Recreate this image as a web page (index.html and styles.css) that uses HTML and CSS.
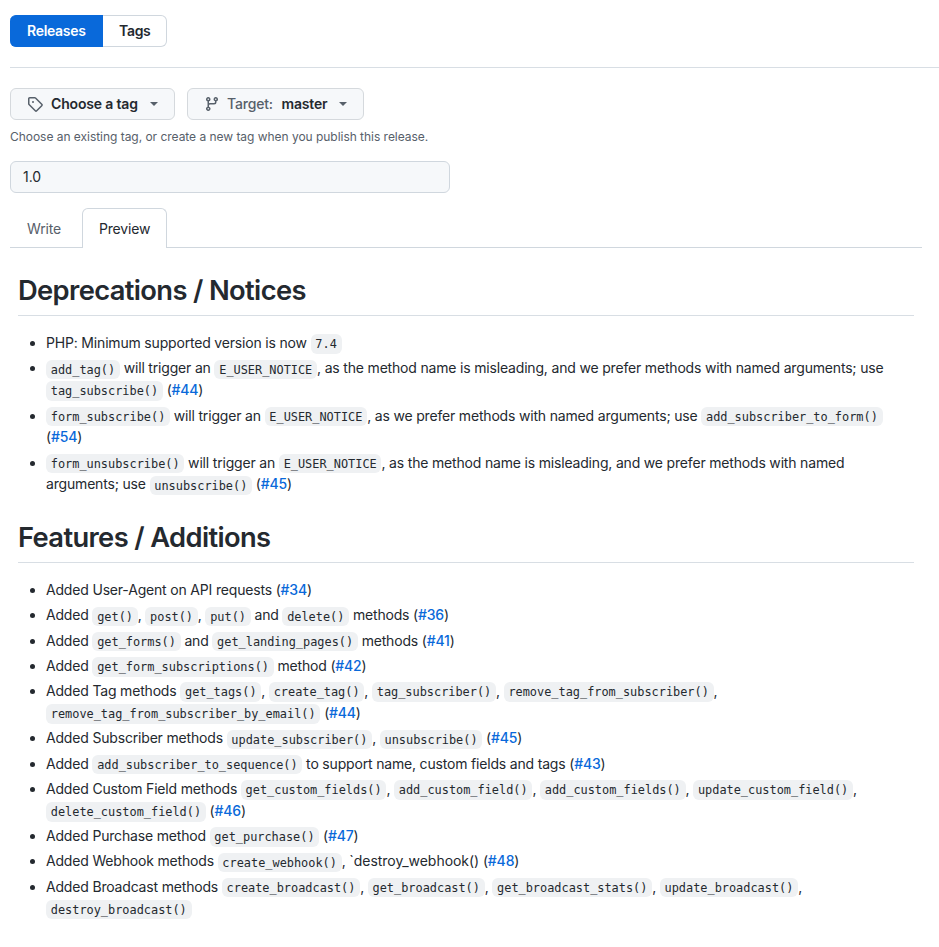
FILE: index.html
```html
<!DOCTYPE html>
<html lang="en">
<head>
<meta charset="utf-8">
<title>New release</title>
<link rel="stylesheet" href="styles.css">
</head>
<body>
<nav class="subnav">
  <a class="subnav-item selected">Releases</a><a class="subnav-item">Tags</a>
</nav>
<main class="form">
  <div class="pickers">
    <button class="btn tag-btn">
      <svg class="icon" viewBox="0 0 16 16" width="16" height="16"><path d="M1 7.775V2.75C1 1.784 1.784 1 2.75 1h5.025c.464 0 .91.184 1.238.513l6.25 6.25a1.75 1.75 0 0 1 0 2.474l-5.026 5.026a1.75 1.75 0 0 1-2.474 0l-6.25-6.25A1.752 1.752 0 0 1 1 7.775Zm1.5 0c0 .066.026.13.073.177l6.25 6.25a.25.25 0 0 0 .354 0l5.025-5.025a.25.25 0 0 0 0-.354l-6.25-6.25a.25.25 0 0 0-.177-.073H2.75a.25.25 0 0 0-.25.25ZM6 5a1 1 0 1 1 0 2 1 1 0 0 1 0-2Z"/></svg>
      <span class="label">Choose a tag</span><span class="caret"></span>
    </button>
    <button class="btn target-btn">
      <svg class="icon" viewBox="0 0 16 16" width="16" height="16"><path d="M9.5 3.25a2.25 2.25 0 1 1 3 2.122V6A2.5 2.5 0 0 1 10 8.5H6a1 1 0 0 0-1 1v1.128a2.251 2.251 0 1 1-1.5 0V5.372a2.25 2.25 0 1 1 1.5 0v1.836A2.493 2.493 0 0 1 6 7h4a1 1 0 0 0 1-1v-.628A2.25 2.25 0 0 1 9.5 3.25Zm-6 0a.75.75 0 1 0 1.5 0 .75.75 0 0 0-1.5 0Zm8.25-.75a.75.75 0 1 0 0 1.5.75.75 0 0 0 0-1.5ZM4.25 12a.75.75 0 1 0 0 1.5.75.75 0 0 0 0-1.5Z"/></svg>
      <span class="prefix">Target:</span><span class="label">master</span><span class="caret"></span>
    </button>
  </div>
  <p class="hint">Choose an existing tag, or create a new tag when you publish this release.</p>
  <input class="title-input" type="text" value="1.0" aria-label="Release title">
  <div class="tabs"><a class="tab">Write</a><a class="tab active">Preview</a></div>
  <article class="markdown">
    <h1>Deprecations / Notices</h1>
    <ul>
      <li>PHP: Minimum supported version is now <code>7.4</code></li>
      <li><code>add_tag()</code> will trigger an <code>E_USER_NOTICE</code>, as the method name is misleading, and we prefer methods with named arguments; use <code>tag_subscribe()</code> (<a>#44</a>)</li>
      <li><code>form_subscribe()</code> will trigger an <code>E_USER_NOTICE</code>, as we prefer methods with named arguments; use <code>add_subscriber_to_form()</code> (<a>#54</a>)</li>
      <li><code>form_unsubscribe()</code> will trigger an <code>E_USER_NOTICE</code>, as the method name is misleading, and we prefer methods with named <br>arguments; use <code>unsubscribe()</code> (<a>#45</a>)</li>
    </ul>
    <h1>Features / Additions</h1>
    <ul>
      <li>Added User-Agent on API requests (<a>#34</a>)</li>
      <li>Added <code>get()</code>, <code>post()</code>, <code>put()</code> and <code>delete()</code> methods (<a>#36</a>)</li>
      <li>Added <code>get_forms()</code> and <code>get_landing_pages()</code> methods (<a>#41</a>)</li>
      <li>Added <code>get_form_subscriptions()</code> method (<a>#42</a>)</li>
      <li>Added Tag methods <code>get_tags()</code>, <code>create_tag()</code>, <code>tag_subscriber()</code>, <code>remove_tag_from_subscriber()</code>, <code>remove_tag_from_subscriber_by_email()</code> (<a>#44</a>)</li>
      <li>Added Subscriber methods <code>update_subscriber()</code>, <code>unsubscribe()</code> (<a>#45</a>)</li>
      <li>Added <code>add_subscriber_to_sequence()</code> to support name, custom fields and tags (<a>#43</a>)</li>
      <li>Added Custom Field methods <code>get_custom_fields()</code>, <code>add_custom_field()</code>, <code>add_custom_fields()</code>, <code>update_custom_field()</code>, <code>delete_custom_field()</code> (<a>#46</a>)</li>
      <li>Added Purchase method <code>get_purchase()</code> (<a>#47</a>)</li>
      <li>Added Webhook methods <code>create_webhook()</code>, <span class="plain">`destroy_webhook()</span> (<a>#48</a>)</li>
      <li>Added Broadcast methods <code>create_broadcast()</code>, <code>get_broadcast()</code>, <code>get_broadcast_stats()</code>, <code>update_broadcast()</code>, <code>destroy_broadcast()</code></li>
    </ul>
  </article>
</main>
</body>
</html>
```
FILE: styles.css
```css
* { box-sizing: border-box; }
body { margin: 0; padding: 15px 0 0 10px; height: 947px; overflow: hidden; background: #fff; color: #24292f; font: 14px/21px Inter, sans-serif; letter-spacing: -0.18px; }
.subnav { display: flex; height: 53px; border-bottom: 1px solid #d8dee4; }
.subnav-item { width: 64px; height: 32px; padding: 5px 16px; border: 1px solid #d0d7de; border-left: 0; border-radius: 0 6px 6px 0; color: #24292f; font-weight: 600; line-height: 20px; letter-spacing: -0.3px; }
.subnav-item.selected { width: 93px; padding-left: 17px; color: #fff; background: #0969da; border-color: #0969da; border-radius: 6px 0 0 6px; }
.form { width: 912px; padding-top: 20px; }
.pickers { display: flex; gap: 12px; }
.btn { display: flex; align-items: center; height: 32px; padding: 0 16px; border: 1px solid #d5d9dd; border-radius: 6px; background: #f6f8fa; color: #24292f; font: 600 14px/20px Inter, sans-serif; letter-spacing: -0.17px; }
.tag-btn { width: 165px; }
.target-btn { width: 177px; }
.icon { flex: none; margin-right: 8px; fill: #57606a; }
.target-btn .icon { margin-right: 7px; }
.prefix { margin-right: 8.6px; color: #57606a; font-weight: 500; }
.label { white-space: nowrap; }
.caret { margin-left: auto; border: 4px solid transparent; border-top-color: #57606a; border-bottom: 0; }
.hint { margin: 8px 0 0; color: #57606a; font-size: 12px; line-height: 18px; letter-spacing: -0.033px; }
.title-input { display: block; width: 440px; height: 32px; margin-top: 15px; padding: 4px 12px 6px; border: 1px solid #d0d7de; border-radius: 6px; background: #f6f8fa; color: #24292f; font: 14px/20px Inter, sans-serif; }
.tabs { display: flex; height: 40px; margin-top: 15px; border-bottom: 1px solid #d0d7de; }
.tab { width: 68px; height: 40px; padding: 10px 17px; color: #57606a; }
.tab.active { width: 85px; margin-left: 4px; padding: 9px 16px; border: 1px solid #d0d7de; border-bottom: 0; border-radius: 6px 6px 0 0; background: #fff; color: #24292f; }
.markdown { padding: 25px 8px 0; line-height: 21.8px; }
h1 { margin: 0 0 16.2px; padding-bottom: 7px; border-bottom: 1px solid #d8dee4; font-size: 27.3px; line-height: 35px; font-weight: 600; letter-spacing: -0.62px; }
ul { margin: 0 0 24.6px; padding-left: 28px; }
li + li { margin-top: 3.5px; }
a { color: #0969da; }
li a { font-weight: 450; }
.plain { letter-spacing: -0.03px; }
code { padding: 2.8px 4.76px; border-radius: 6px; background: #eff1f3; font: 11.9px "DejaVu Sans Mono", monospace; letter-spacing: 0; }
```
